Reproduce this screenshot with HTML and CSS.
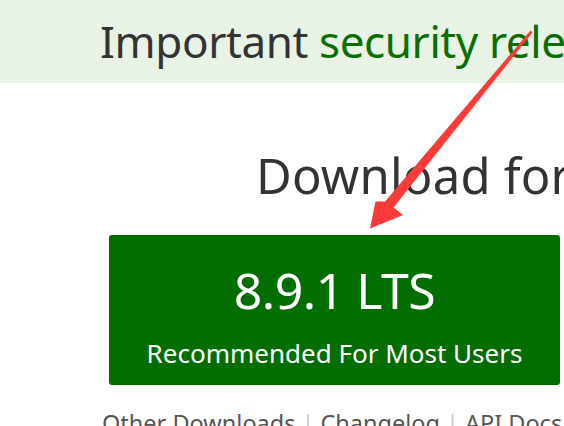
FILE: index.html
```html
<!DOCTYPE html>
<html>
<head>
<meta charset="utf-8">
<link rel="stylesheet" href="styles.css">
</head>
<body>
<div class="banner"><span class="banner-text">Important <a class="banner-link">security releases</a>, please update now!</span></div>
<main class="main">
  <h1 class="heading">Download for Windows (x64)</h1>
  <a class="btn">
    <span class="btn-version">8.9.1 LTS</span>
    <span class="btn-sub">Recommended For Most Users</span>
  </a>
  <ul class="links">
    <li><a>Other Downloads</a></li>
    <li class="sep">|</li>
    <li><a>Changelog</a></li>
    <li class="sep">|</li>
    <li><a>API Docs</a></li>
  </ul>
</main>
<svg class="arrow" width="564" height="426" viewBox="0 0 564 426">
  <polygon points="530.5,30.5 532.5,32.5 393.5,207.5 403,215 370,228.5 375.5,201.5 385,201.5" fill="#fb3a3a"/>
</svg>
</body>
</html>
```
FILE: styles.css
```css
html, body {
  margin: 0;
  padding: 0;
  width: 564px;
  height: 426px;
  overflow: hidden;
  background: #fff;
  font-family: "Noto Sans", Lato, sans-serif;
}
.banner {
  height: 83px;
  background: #e8f3e6;
  padding-left: 100px;
  box-sizing: border-box;
  white-space: nowrap;
  overflow: hidden;
}
.banner-text {
  display: block;
  font-size: 44px;
  line-height: 83px;
  color: #333;
  letter-spacing: -0.4px;
}
.banner-link {
  color: #0a6e00;
}
.main {
  display: flex;
  flex-direction: column;
  align-items: flex-start;
  padding-left: 109px;
}
.heading {
  margin: 62px 0 0 147px;
  font-weight: normal;
  font-size: 49px;
  line-height: 60px;
  color: #333;
  white-space: nowrap;
  letter-spacing: 0.2px;
}
.btn {
  margin-top: 30px;
  width: 451px;
  height: 150px;
  box-sizing: border-box;
  background: #026e00;
  border-radius: 3px;
  color: #fff;
  display: flex;
  flex-direction: column;
  align-items: center;
  padding-top: 26px;
}
.btn-version {
  font-size: 50px;
  line-height: 58px;
  letter-spacing: -0.5px;
}
.btn-sub {
  margin-top: 19px;
  font-size: 26px;
  line-height: 30px;
  letter-spacing: 0;
}
.links {
  list-style: none;
  margin: 24px 0 0 -7px;
  padding: 0;
  display: flex;
  gap: 6px;
  font-size: 23.5px;
  line-height: 28px;
  color: #555;
  white-space: nowrap;
}
.links .sep {
  color: #ccc;
}
.arrow {
  position: absolute;
  left: 0;
  top: 0;
  pointer-events: none;
}
```
